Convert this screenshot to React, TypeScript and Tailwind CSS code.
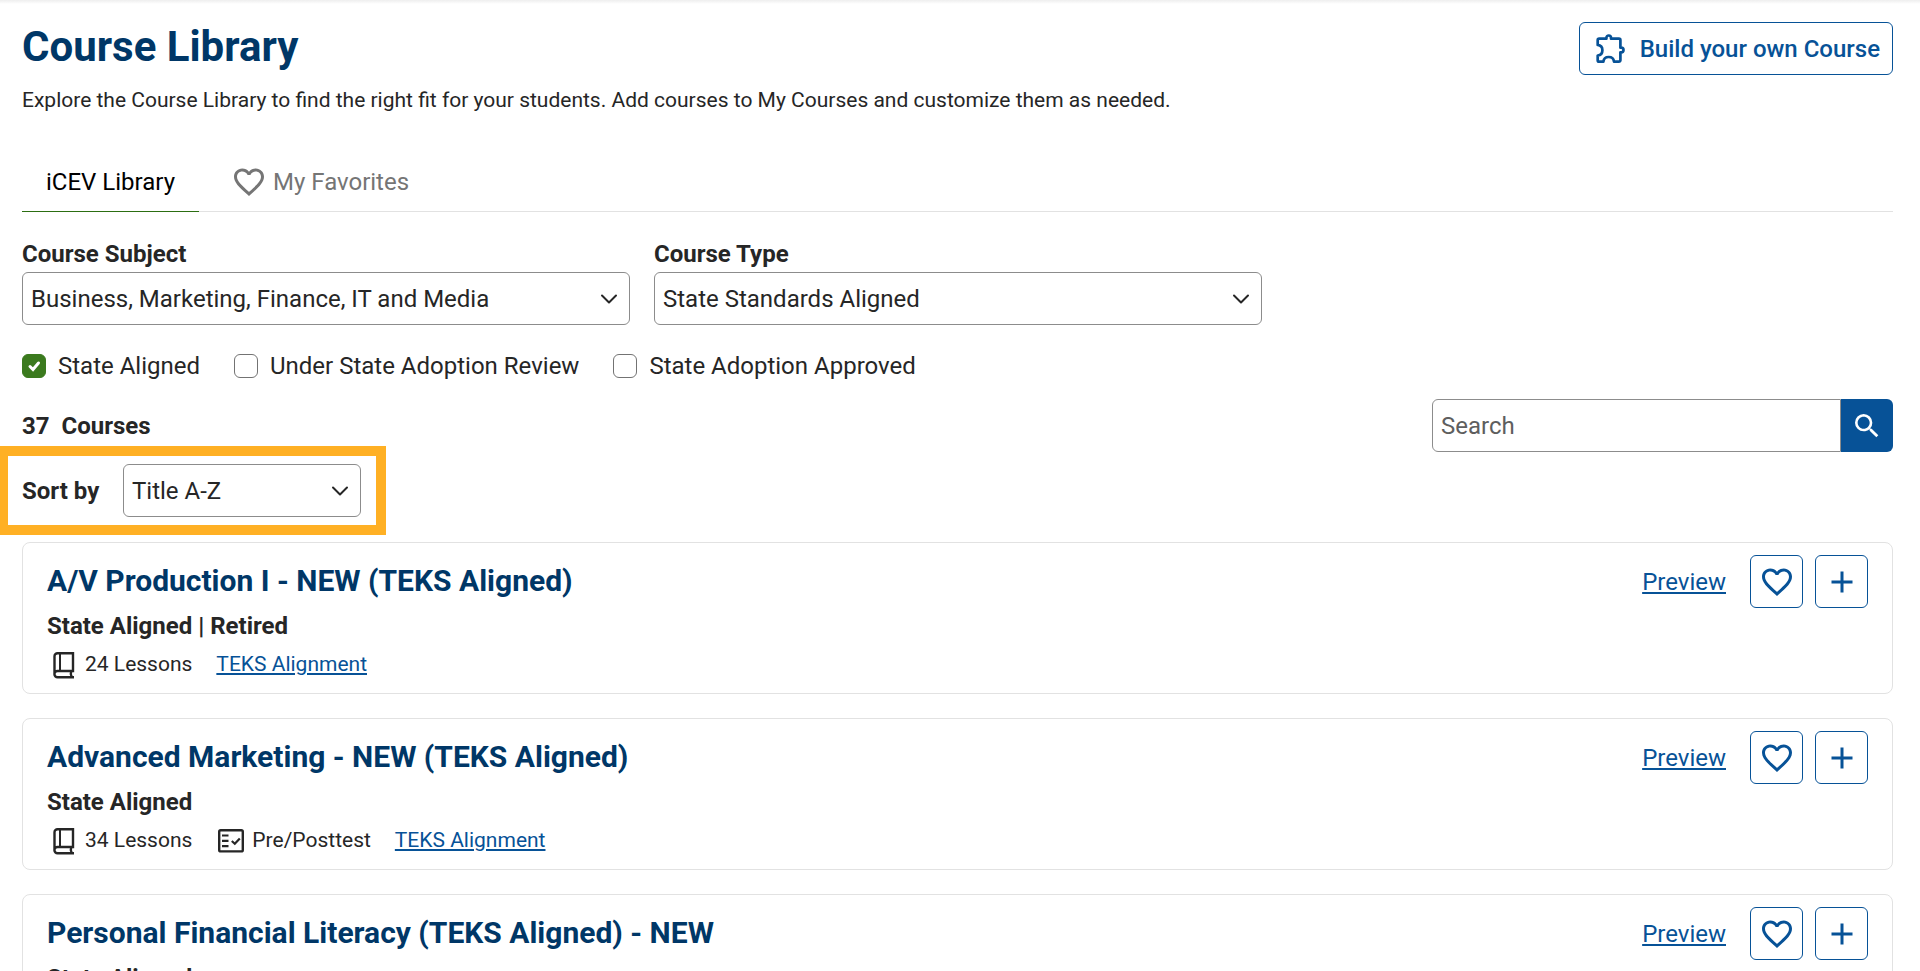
import { useState } from "react";
import type { ReactNode } from "react";
import { MdAdd, MdFavoriteBorder, MdSearch } from "react-icons/md";

type Course = {
  title: string;
  status: string;
  lessons: number;
  prePosttest: boolean;
};

const courses: Course[] = [
  { title: "A/V Production I - NEW (TEKS Aligned)", status: "State Aligned | Retired", lessons: 24, prePosttest: false },
  { title: "Advanced Marketing - NEW (TEKS Aligned)", status: "State Aligned", lessons: 34, prePosttest: true },
  { title: "Personal Financial Literacy (TEKS Aligned) - NEW", status: "State Aligned", lessons: 30, prePosttest: true },
];

function PuzzleIcon() {
  return (
    <svg viewBox="0 0 30 30" className="size-[30px]" fill="none" stroke="currentColor" strokeWidth="2.7" strokeLinejoin="round" aria-hidden="true">
      <path d="M1.700 6.200a1.500 1.500 0 0 1 1.500-1.500h7.200v-.9a2.300 2.300 0 0 1 4.600 0v.9h7.900a1.500 1.500 0 0 1 1.500 1.500v7.500h.8a2.300 2.300 0 0 1 0 4.600h-.8v7.900a1.500 1.500 0 0 1-1.500 1.500h-4.900c-.3-2.900-2.200-4.700-5.300-4.700s-5 1.800-5.300 4.700H3.200a1.500 1.500 0 0 1-1.500-1.500v-4.700c2.900-.3 4.700-2.200 4.700-5.300s-1.800-5-4.700-5.300z" />
    </svg>
  );
}

function BookIcon() {
  return (
    <svg viewBox="0 0 22 27" className="h-[27px] w-[22px]" fill="none" stroke="currentColor" strokeWidth="2.4" aria-hidden="true">
      <path d="M1.500 22V4.200a3 3 0 0 1 3-3H20V19H4.500a3 3 0 0 0 0 6.200H21M18.300 19q-1.200 3 .4 6" />
      <path d="M7 1.200V19" strokeWidth="2" />
    </svg>
  );
}

function TestIcon() {
  return (
    <svg viewBox="0 0 26 24" className="h-6 w-[26px]" fill="none" stroke="currentColor" strokeWidth="2.400" aria-hidden="true">
      <rect x="1.200" y="1.200" width="23.600" height="21.200" rx="1.500" />
      <path d="M4 6.500h6.500M4 11.800h6.500M4 17.100h6.500M13.800 12l3 2.800 5-5.300" strokeWidth="2.200" />
    </svg>
  );
}

function Select({ id, options, className }: { id: string; options: string[]; className?: string }) {
  return (
    <div className={`grid items-center ${className ?? ""}`}>
      <select
        id={id}
        className="col-start-1 row-start-1 h-[53px] w-full appearance-none rounded-md border border-[#8c8c8c] bg-white pr-10 pl-2 text-2xl text-[#262626]"
      >
        {options.map((o) => (
          <option key={o}>{o}</option>
        ))}
      </select>
      <svg
        viewBox="0 0 18 12"
        className="pointer-events-none col-start-1 row-start-1 mr-3 h-3 w-[18px] justify-self-end"
        fill="none"
        stroke="currentColor"
        strokeWidth="2"
        strokeLinecap="round"
        strokeLinejoin="round"
        aria-hidden="true"
      >
        <path d="M2 2.500l7 7 7-7" />
      </svg>
    </div>
  );
}

function Check({ label, initial = false }: { label: string; initial?: boolean }) {
  const [on, setOn] = useState(initial);
  return (
    <label className="flex items-center gap-3 text-2xl">
      <span className="grid size-6 place-items-center">
        <input
          type="checkbox"
          checked={on}
          onChange={(e) => setOn(e.target.checked)}
          className="col-start-1 row-start-1 size-6 appearance-none rounded-md border border-[#737373] bg-white checked:border-[#3b7a1e] checked:bg-[#3b7a1e]"
        />
        {on && (
          <svg viewBox="0 0 24 24" className="pointer-events-none col-start-1 row-start-1 size-6" fill="none" stroke="white" strokeWidth="3" strokeLinecap="round" aria-hidden="true">
            <path d="M8 12.500l3 3 5.500-6.500" />
          </svg>
        )}
      </span>
      {label}
    </label>
  );
}

function IconButton({ label, children }: { label: string; children: ReactNode }) {
  return (
    <button type="button" aria-label={label} className="grid size-[53px] place-items-center rounded-md border border-[#075297]">
      {children}
    </button>
  );
}

function CourseCard({ course }: { course: Course }) {
  return (
    <li className="flex items-start justify-between rounded-lg border border-[#e2e2e2] px-6 pt-3 pb-[7px]">
      <div>
        <h2 className="pt-1 pb-[5px] text-[30px] leading-[44px] font-bold text-[#003767]">{course.title}</h2>
        <p className="text-2xl leading-9 font-bold">{course.status}</p>
        <div className="flex h-[42px] items-center gap-6 text-[21px]">
          <span className="flex items-center gap-2.5 pl-1.5">
            <BookIcon />
            {course.lessons} Lessons
          </span>
          {course.prePosttest && (
            <span className="flex items-center gap-2 pl-0.5">
              <TestIcon />
              Pre/Posttest
            </span>
          )}
          <a href="#alignment" className="text-[#075297] underline">TEKS Alignment</a>
        </div>
      </div>
      <div className="flex items-center gap-3">
        <a href="#preview" className="mr-3 text-2xl text-[#075297] underline">Preview</a>
        <IconButton label={`Add ${course.title} to favorites`}>
          <MdFavoriteBorder className="size-9 text-[#075297]" />
        </IconButton>
        <IconButton label={`Add ${course.title} to My Courses`}>
          <MdAdd className="size-9 text-[#075297]" />
        </IconButton>
      </div>
    </li>
  );
}

export default function App() {
  return (
    <div className="h-screen overflow-hidden bg-white font-[Roboto,sans-serif] text-[#262626]">
      <div className="h-1 bg-linear-to-b from-[#eeeeee] to-white" />
      <main className="pr-[27px] pl-[22px]">
        <header className="flex items-start justify-between pt-[18px]">
          <div>
            <h1 className="text-[42px] leading-[50px] font-bold text-[#003767]">Course Library</h1>
            <p className="mt-3 text-[21px] leading-8">
              Explore the Course Library to find the right fit for your students. Add courses to My Courses and customize them as needed.
            </p>
          </div>
          <button type="button" className="flex h-[53px] items-center gap-3.5 rounded-md border border-[#075297] pr-3 pl-4 text-2xl font-medium text-[#075297]">
            <PuzzleIcon />
            Build your own Course
          </button>
        </header>

        <div role="tablist" className="mt-[37px] flex border-b border-[#e2e2e2] text-2xl">
          <button type="button" role="tab" aria-selected="true" className="-mb-px h-[59px] border-b border-[#2c6e12] px-6 text-black">
            iCEV Library
          </button>
          <button type="button" role="tab" aria-selected="false" className="ml-8 flex h-[58px] items-center gap-1.5 text-[#757575]">
            <MdFavoriteBorder className="size-9" aria-hidden="true" />
            My Favorites
          </button>
        </div>

        <div className="mt-6 flex gap-6">
          <div className="w-[608px]">
            <label htmlFor="subject" className="block text-2xl leading-9 font-bold">Course Subject</label>
            <Select id="subject" options={["Business, Marketing, Finance, IT and Media"]} />
          </div>
          <div className="w-[608px]">
            <label htmlFor="type" className="block text-2xl leading-9 font-bold">Course Type</label>
            <Select id="type" options={["State Standards Aligned"]} />
          </div>
        </div>

        <div className="mt-[25px] flex gap-[34px]">
          <Check label="State Aligned" initial />
          <Check label="Under State Adoption Review" />
          <Check label="State Adoption Approved" />
        </div>

        <div className="mt-[17px] flex items-center justify-between">
          <p className="flex gap-3 text-2xl font-bold">
            <span>37</span>
            <span>Courses</span>
          </p>
          <form className="flex" onSubmit={(e) => e.preventDefault()}>
            <input
              type="search"
              aria-label="Search"
              placeholder="Search"
              className="h-[53px] w-[409px] rounded-l-md border border-[#8c8c8c] px-2 text-2xl placeholder:text-[#5e5e5e]"
            />
            <button type="submit" aria-label="Search" className="grid h-[53px] w-[52px] place-items-center rounded-r-md bg-[#075297] text-white">
              <MdSearch className="size-8" />
            </button>
          </form>
        </div>

        <div className="-mt-1.5 -ml-6 flex w-[388px] items-center border-[10px] border-[#ffb024] py-2 pl-[14px]">
          <label htmlFor="sort" className="w-[101px] text-2xl font-bold">Sort by</label>
          <Select id="sort" options={["Title A-Z"]} className="w-[238px]" />
        </div>

        <ul className="mt-[7px] flex flex-col gap-6">
          {courses.map((c) => (
            <CourseCard key={c.title} course={c} />
          ))}
        </ul>
      </main>
    </div>
  );
}
